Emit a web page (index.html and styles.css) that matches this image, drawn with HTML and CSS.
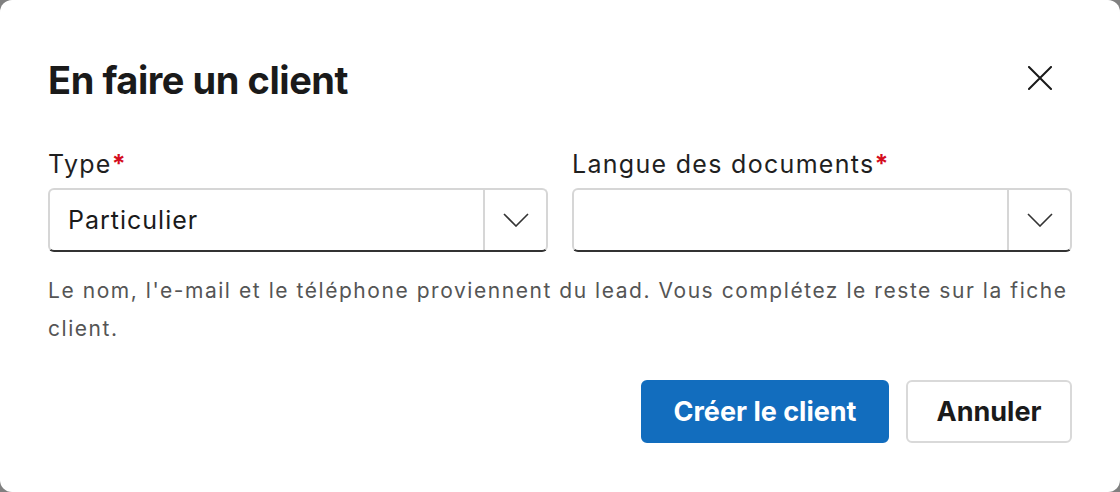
FILE: index.html
```html
<!DOCTYPE html>
<html lang="fr">
<head>
<meta charset="utf-8">
<title>En faire un client</title>
<link rel="stylesheet" href="styles.css">
</head>
<body>
<div class="dialog" role="dialog" aria-labelledby="dlg-title">
  <div class="header">
    <h1 class="title" id="dlg-title">En faire un client</h1>
    <button class="close" type="button" aria-label="Fermer">
      <svg width="24" height="24" viewBox="0 0 24 24" fill="none" stroke="#1a1a1a" stroke-width="2" stroke-linecap="square"><path d="M1 1 L23 23 M23 1 L1 23"/></svg>
    </button>
  </div>
  <div class="fields">
    <div class="field">
      <label class="label">Type<span class="req">*</span></label>
      <div class="select">
        <span class="value">Particulier</span>
        <span class="caret"><svg width="26" height="14" viewBox="0 0 26 14" fill="none" stroke="#333" stroke-width="1.6"><path d="M1 1 L13 13 L25 1"/></svg></span>
      </div>
    </div>
    <div class="field">
      <label class="label">Langue des documents<span class="req">*</span></label>
      <div class="select">
        <span class="value"></span>
        <span class="caret"><svg width="26" height="14" viewBox="0 0 26 14" fill="none" stroke="#333" stroke-width="1.6"><path d="M1 1 L13 13 L25 1"/></svg></span>
      </div>
    </div>
  </div>
  <p class="help">Le nom, l'e-mail et le téléphone proviennent du lead. Vous complétez le reste sur la fiche client.</p>
  <div class="actions">
    <button class="btn primary" type="button">Créer le client</button>
    <button class="btn secondary" type="button">Annuler</button>
  </div>
</div>
</body>
</html>
```
FILE: styles.css
```css
html, body {
  margin: 0;
  padding: 0;
  background: #808080;
}
body {
  font-family: Inter, "Noto Sans", "DejaVu Sans", sans-serif;
  color: #1a1a1a;
}
.dialog {
  box-sizing: border-box;
  width: 1120px;
  height: 492px;
  background: #fff;
  border-radius: 12px;
  padding: 56px 48px 49px;
  display: flex;
  flex-direction: column;
}
.header {
  display: flex;
  align-items: center;
  justify-content: space-between;
  height: 48px;
}
.title {
  margin: 0;
  font-size: 38px;
  line-height: 48px;
  font-weight: 700;
  letter-spacing: -0.45px;
  color: #1a1a1a;
}
.close {
  width: 48px;
  height: 48px;
  margin-right: 8px;
  margin-top: -4px;
  padding: 0;
  border: 0;
  background: transparent;
  display: flex;
  align-items: center;
  justify-content: center;
}
.fields {
  margin-top: 44px;
  display: grid;
  grid-template-columns: 1fr 1fr;
  gap: 24px;
}
.field {
  display: flex;
  flex-direction: column;
}
.label {
  font-size: 25px;
  line-height: 32px;
  color: #1f1f1f;
  margin-bottom: 8px;
  letter-spacing: 1.3px;
}
.req {
  color: #d40d1e;
  font-weight: 700;
  letter-spacing: 0;
}
.select {
  box-sizing: border-box;
  height: 64px;
  display: flex;
  align-items: stretch;
  border: 2px solid #d6d6d6;
  border-bottom-color: #333;
  border-radius: 6px;
}
.value {
  flex: 1;
  display: flex;
  align-items: center;
  padding-left: 18px;
  font-size: 25px;
  letter-spacing: 1px;
  color: #1a1a1a;
}
.caret {
  width: 61px;
  border-left: 2px solid #d6d6d6;
  display: flex;
  align-items: center;
  justify-content: center;
}
.help {
  margin: 20px 0 0;
  font-size: 21px;
  line-height: 38px;
  color: #555;
  letter-spacing: 1.55px;
}
.actions {
  margin-top: auto;
  display: flex;
  justify-content: flex-end;
  gap: 17px;
}
.btn {
  box-sizing: border-box;
  height: 63px;
  border-radius: 6px;
  font-family: inherit;
  font-size: 27px;
  font-weight: 700;
  border: 2px solid transparent;
}
.primary {
  width: 248px;
  padding: 0;
  background: #126dbe;
  border-color: #126dbe;
  color: #fff;
}
.secondary {
  width: 166px;
  padding: 0;
  background: #fff;
  border-color: #d9d9d9;
  color: #1a1a1a;
}
```
